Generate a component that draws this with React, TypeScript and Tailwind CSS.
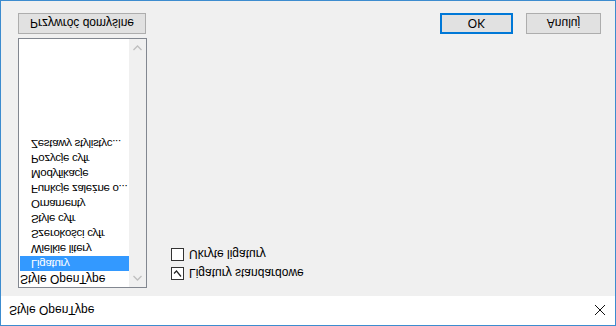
import React from 'react';

const ITEMS = [
  'Ligatury',
  'Wielkie litery',
  'Szerokości cyfr',
  'Style cyfr',
  'Ornamenty',
  'Funkcje zależne o...',
  'Modyfikacje',
  'Pozycje cyfr',
  'Zestawy stylistyc...',
];

const font = { fontFamily: '"Liberation Sans", Arial, sans-serif' };

const App: React.FC = () => {
  return (
    // the reference shot is upside down, so the whole dialog is flipped vertically
    <div
      className="w-[616px] h-[326px] flex flex-col border border-[#3d8ccf] bg-[#f0f0f0] text-[12px] text-black -scale-y-100"
      style={font}
    >
      {/* Title bar */}
      <div className="h-[29px] flex items-center justify-between bg-white pl-[8px] pr-[8px] shrink-0">
        <span className="text-[12px]">Style OpenType</span>
        <svg width="12" height="12" viewBox="0 0 12 12" className="mr-[1px]">
          <path d="M1 1 L11 11 M11 1 L1 11" stroke="#111" strokeWidth="1" />
        </svg>
      </div>

      {/* Body */}
      <div className="flex-1 flex flex-col px-[17px] pt-[8px]">
        <div className="flex">
          {/* Tree list */}
          <div className="w-[129px] h-[250px] border border-[#828790] bg-white flex">
            <div className="flex-1 min-w-0 pt-[1px] whitespace-nowrap">
              <div className="h-[15px] leading-[15px] pl-[1px]">Style OpenType</div>
              {ITEMS.map((item, i) => (
                <div
                  key={item}
                  className={`h-[15px] leading-[15px] pl-[11px] ml-[1px] text-[11.5px] tracking-[-0.3px] ${i === 0 ? 'bg-[#3399ff] text-white' : ''}`}
                >
                  {item}
                </div>
              ))}
            </div>
            {/* Scrollbar (disabled) */}
            <div className="w-[17px] shrink-0 bg-[#f0f0f0] flex flex-col justify-between items-center py-[6px]">
              <svg width="9" height="6" viewBox="0 0 9 6">
                <path d="M0.5 5 L4.5 1 L8.5 5" stroke="#bfbfbf" strokeWidth="1.3" fill="none" />
              </svg>
              <svg width="9" height="6" viewBox="0 0 9 6">
                <path d="M0.5 1 L4.5 5 L8.5 1" stroke="#bfbfbf" strokeWidth="1.3" fill="none" />
              </svg>
            </div>
          </div>

          {/* Checkboxes */}
          <div className="ml-[24px] mt-[8px] flex flex-col gap-[6px]">
            <label className="flex items-center gap-[5px] h-[13px]">
              <span className="w-[13px] h-[13px] border border-[#333] bg-white flex items-center justify-center">
                <svg width="9" height="9" viewBox="0 0 9 9">
                  <path d="M1 4.5 L3.5 7 L8 1.5" stroke="#222" strokeWidth="1.2" fill="none" />
                </svg>
              </span>
              <span>Ligatury standardowe</span>
            </label>
            <label className="flex items-center gap-[5px] h-[13px]">
              <span className="w-[13px] h-[13px] border border-[#333] bg-white" />
              <span>Ukryte ligatury</span>
            </label>
          </div>
        </div>

        {/* Buttons */}
        <div className="flex items-center mt-[4px]">
          <button className="w-[128px] h-[21px] border border-[#adadad] bg-[#e1e1e1]">Przywróć domyślne</button>
          <div className="flex-1" />
          <button className="w-[73px] h-[21px] border-2 border-[#0078d7] bg-[#e1e1e1]">OK</button>
          <button className="w-[75px] h-[21px] border border-[#adadad] bg-[#e1e1e1] ml-[13px] mr-[-3px]">Anuluj</button>
        </div>
      </div>
    </div>
  );
};

export default App;
